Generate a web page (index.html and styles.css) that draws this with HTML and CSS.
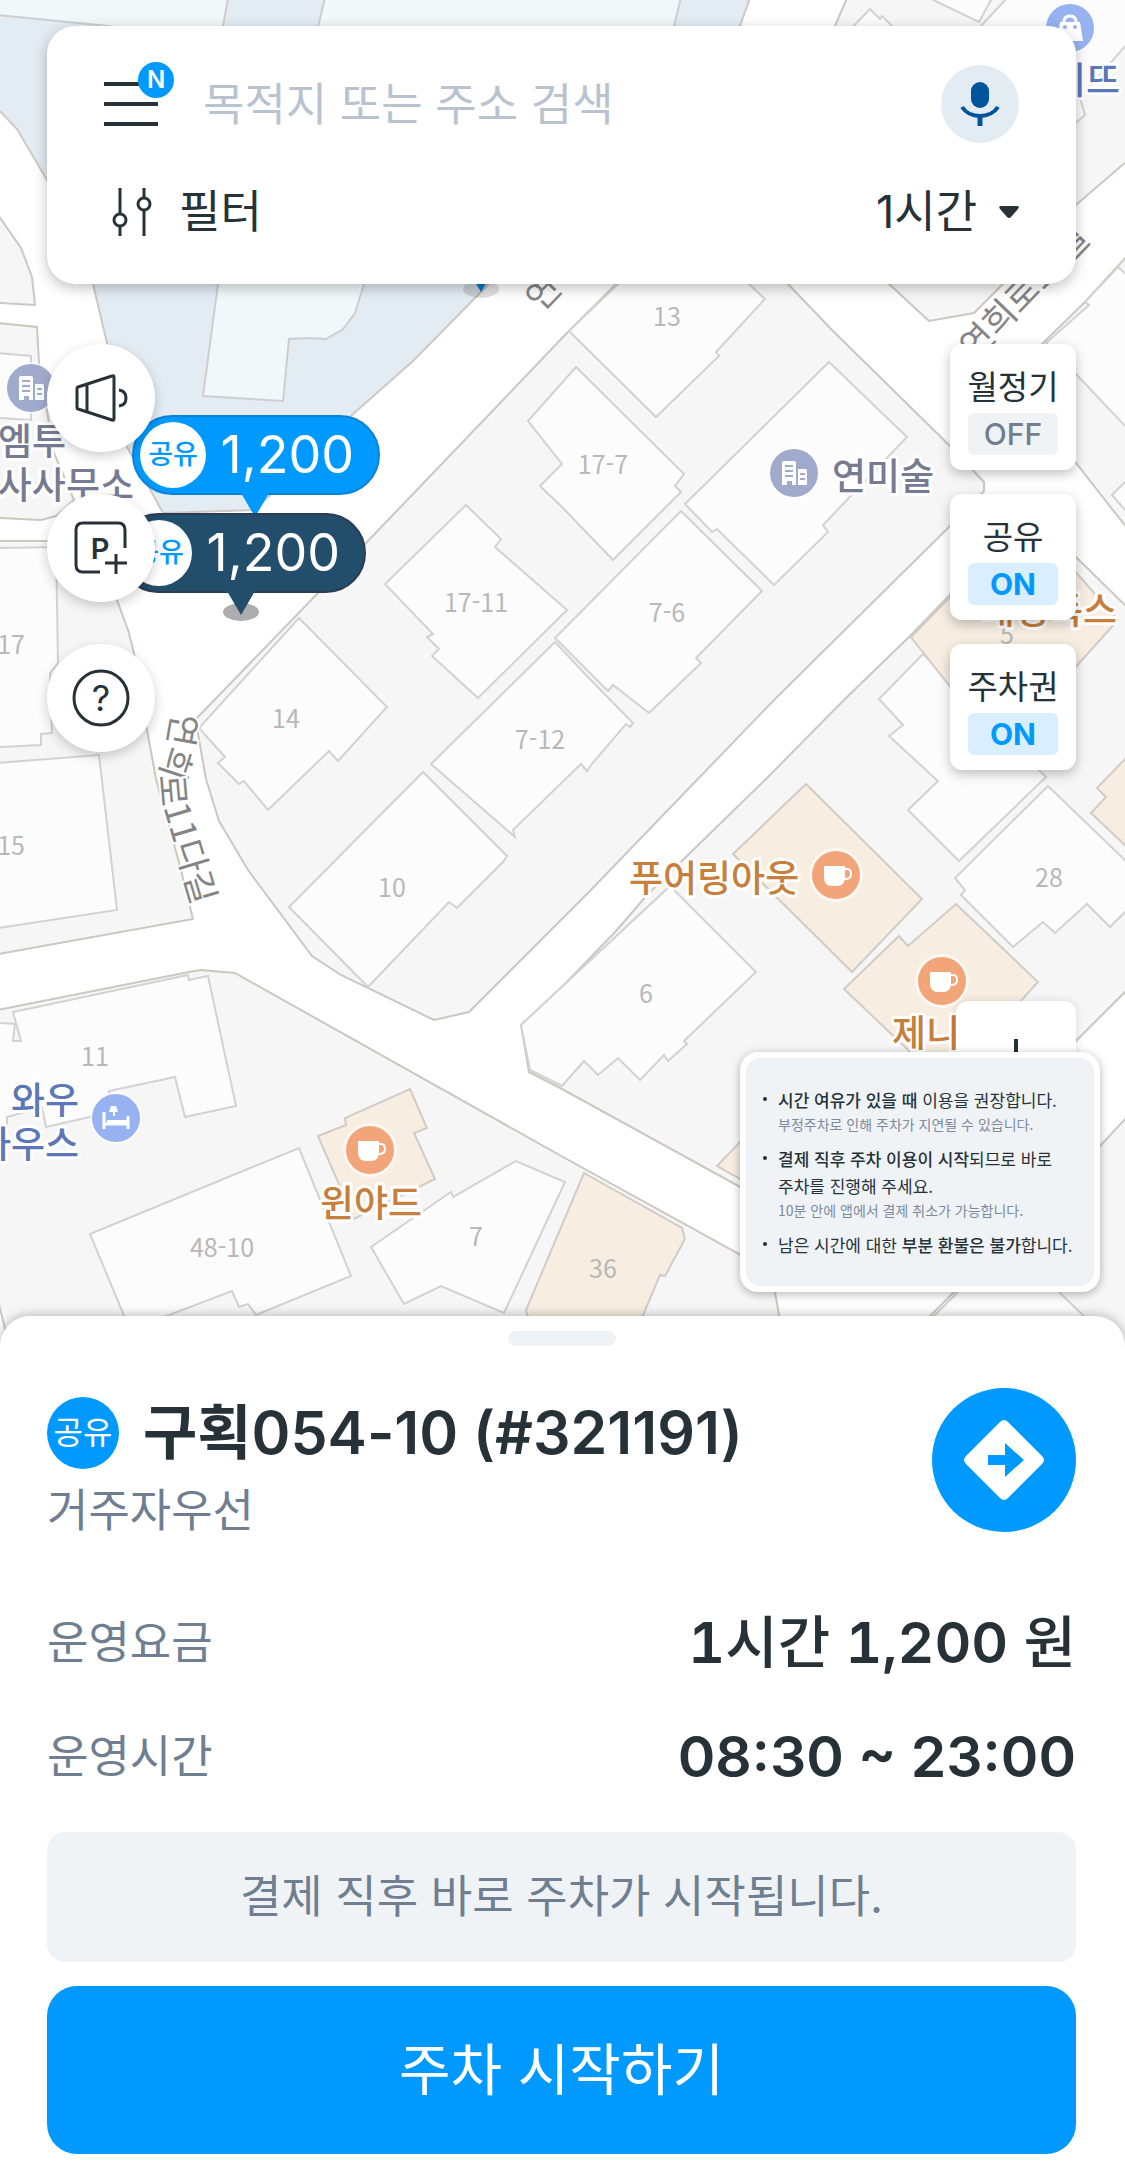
FILE: index.html
```html
<!DOCTYPE html>
<html lang="ko">
<head>
    <meta charset="UTF-8">
    <meta name="viewport" content="width=device-width, initial-scale=1.0">
    <title>주차 지도</title>
    <link rel="stylesheet" href="styles.css">
</head>
<body>

    <main class="map-view">
        <svg class="map" viewBox="0 0 1125 1346" preserveAspectRatio="xMidYMin slice" aria-label="지도">
            <defs>
                <g id="cafe">
                    <circle r="27" fill="#fff" opacity=".6"/>
                    <circle r="24" fill="#f1a578"/>
                    <path d="M-12 -9H9V2q0 9 -8 9H-4q-8 0 -8 -9z" fill="#fff"/>
                    <path d="M9 -6h2q4 0 4 5t-6 5" fill="none" stroke="#fff" stroke-width="2"/>
                </g>
                <g id="office">
                    <circle r="26" fill="#fff" opacity=".6"/>
                    <circle r="24" fill="#a0aacd"/>
                    <path d="M-12 12V-10q0 -2 2 -2H0q2 0 2 2V12H-2V8H-7v4zM4 -4h7q2 0 2 2V12H4z" fill="#fff"/>
                    <path d="M-9 -7H-1M-9 -2H-1M-9 3H-1M6 1h5M6 6h5" stroke="#a0aacd" stroke-width="2"/>
                </g>
                <g id="hotel">
                    <circle r="26" fill="#fff" opacity=".6"/>
                    <circle r="24" fill="#96b2f0"/>
                    <path d="M-12 -6V11M12 -2V11M-12 6H12" stroke="#fff" stroke-width="3"/>
                    <path d="M-9 2H11V7H-9zM-5 -12h5l2 6H-7zM-3 -6h2v4h-2z" fill="#fff"/>
                </g>
                <g id="bag">
                    <circle r="24" fill="#96b2f0"/>
                    <path d="M-10 -6H10L13 13H-13z" fill="#fff"/>
                    <path d="M-6 -6q0 -6 6 -6t6 6" fill="none" stroke="#fff" stroke-width="3"/>
                    <circle cx="-5" cy="-1" r="2" fill="#96b2f0"/>
                    <circle cx="5" cy="-1" r="2" fill="#96b2f0"/>
                </g>
                <path id="road-west" d="M173 712L165 757Q156 782 163 806L194 910"/>
            </defs>

            <rect width="1125" height="1346" fill="#fff"/>

            <!-- school block -->
            <path class="school" d="M-2 -2H750L740 26L640 125L481 292L413 361L352 415L255 510L163 513L127 447L107 343L93 284L47 180L17 129L-2 109z"/>
            <path class="school-building" d="M-2 -2H228L223 26L210 40L108 26L-2 15zM325 -2H681L674 26L660 60H310zM218 284L203 396L283 401L289 339L307 338L326 339L343 329L355 313L364 284L370 250H222z"/>

            <!-- land blocks between the roads -->
            <path class="land" d="M-2 215L21 248L32 277L35 305L-2 303z"/>
            <path class="land" d="M-2 323L37 327L39 363L54 453L74 500L56 516L41 520L-2 518z"/>
            <path class="land" d="M-2 541H47Q98 546 117 600L128 630L134 653L147 730L156 779L180 866L193 919L-2 954z"/>
            <path class="land" d="M-2 1010L189 972L201 970L235 973L563 1157L741 1255L765 1270L775 1292L785 1350H10L-2 1300z"/>
            <path class="land" d="M700 200L788 284L832 330L951 447L984 482V491L951 525L774 700L587 894L562 919L469 1012L434 1020L341 975L312 956L248 870L219 821L206 779L197 728V718L318 593L366 543L503 400L563 337L616 284z"/>
            <path class="land" d="M521 1025L562 987L616 931L648 894L765 780L844 700L911 635L1030 512L1077 558L1127 607V990L1077 1040L900 1230L742 1188L562 1089L529 1072z"/>
            <path class="land" d="M847 -2L835 26L770 165L889 284L929 321L974 313L1003 284L1077 204L1127 161V-2z"/>
            <path class="land" d="M1127 256L1085 302L1000 385L1076 463L1127 528z"/>
            <path class="land" d="M1127 1117L1101 1145L900 1346H1127z"/>

            <!-- buildings -->
            <path class="building" d="M-2 353L31 356V420L-2 418z"/>
            <path class="building" d="M-2 548L56 547L58 663L50 673L52 733L41 734V745L-2 747z"/>
            <path class="building" d="M-2 763L99 755L117 910L-2 928z"/>
            <path class="building" d="M-2 1023L15 1024L13 1041H21L13 1012L188 975L189 980L208 976L236 1106L185 1117L175 1077L109 1091L112 1112L46 1127L42 1107L7 1117V1127H-2z"/>
            <path class="building" d="M90 1234L299 1148L351 1276L256 1315L248 1304L239 1307L232 1291L169 1315L130 1330z"/>
            <path class="building" d="M371 1247L451 1192L453 1197L516 1161L565 1182L504 1313L441 1286L404 1304z"/>
            <path class="building" d="M569 331L618 284L690 230L749 284L765 299L716 352L719 356L656 417z"/>
            <path class="building" d="M576 367L684 474L675 486L681 492L613 560L562 507L540 486L562 464L528 421z"/>
            <path class="building" d="M829 362L907 437L823 525L828 532L774 585L717 529L712 532L685 504z"/>
            <path class="building" d="M466 505L501 539L495 547L567 610L478 698L432 656L439 649L427 637L433 634L385 584z"/>
            <path class="building" d="M681 511L762 591L696 658L701 663L649 713L613 685L608 691L555 638z"/>
            <path class="building" d="M555 642L584 673L633 723L630 727L626 724L591 765L587 771L581 764L513 830L515 837L431 764z"/>
            <path class="building" d="M299 618L387 707L338 761L329 751L268 810L244 781L239 784L218 763L225 757L199 728z"/>
            <path class="building" d="M423 772L507 856L503 862L457 908L449 902L368 987L289 907z"/>
            <path class="building" d="M670 886L756 972L684 1041L687 1044L668 1061L664 1055L640 1080L618 1058L598 1075L584 1061L562 1086L530 1070L521 1025z"/>
            <path class="building" d="M923 654L1046 777L959 861L908 810L938 781L889 736L903 725L879 699z"/>
            <path class="building" d="M1048 786L1127 862V910L1110 927L1087 904L1055 933L1043 922L1013 947L961 895L965 890L955 878z"/>
            <path class="building" d="M929 -2L979 22L992 -2zM840 40L870 9L880 19L882 16L906 40z"/>
            <path class="building" d="M1007 -2L981 26L1000 60L1077 122L1085 115L1080 98L1127 44V-2z"/>
            <path class="building" d="M1118 267L1127 275V428L1077 375L1046 343L1089 305L1085 302zM1127 480L1112 495L1127 512z"/>
            <path class="building" d="M910 1340L958 1292L1010 1245L1085 1317L1110 1346z"/>

            <!-- shops -->
            <path class="shop" d="M318 1136L346 1125L345 1118L410 1089L427 1128L414 1133L435 1179L354 1219z"/>
            <path class="shop" d="M584 1173L682 1228L685 1239L665 1276L660 1275L630 1346H535L526 1310z"/>
            <path class="shop" d="M806 784L922 899L852 972L733 854z"/>
            <path class="shop" d="M956 904L1038 982L945 1085L844 989L899 936L908 946z"/>
            <path class="shop" d="M911 637L1028 518L1118 620L1073 670L1000 750z"/>
            <path class="shop" d="M1127 757L1097 788L1106 797L1091 813L1127 847z"/>
            <path class="shop" d="M717 1166L742 1140L790 1190L742 1180z"/>

            <g class="lot">
                <text x="667" y="326">13</text>
                <text x="603" y="474">17-7</text>
                <text x="476" y="612">17-11</text>
                <text x="667" y="622">7-6</text>
                <text x="286" y="728">14</text>
                <text x="540" y="749">7-12</text>
                <text x="11" y="654">17</text>
                <text x="11" y="855">15</text>
                <text x="392" y="897">10</text>
                <text x="95" y="1066">11</text>
                <text x="222" y="1257">48-10</text>
                <text x="476" y="1246">7</text>
                <text x="603" y="1278">36</text>
                <text x="646" y="1003">6</text>
                <text x="1049" y="887">28</text>
                <text x="1007" y="644">5</text>
            </g>

            <g class="road-name">
                <text><textPath href="#road-west">연희로11다길</textPath></text>
                <text transform="translate(975 361) rotate(-46)">연희로11길</text>
                <text transform="translate(541 313) rotate(-46)">연</text>
            </g>

            <ellipse cx="481" cy="289" rx="18" ry="9" fill="#000" opacity=".12"/>
            <path d="M468 270H494L481 292z" fill="#0078c8"/>

            <use href="#office" x="794" y="473"/>
            <use href="#office" x="31" y="388"/>
            <use href="#hotel" x="116" y="1118"/>
            <use href="#cafe" x="836" y="875"/>
            <use href="#cafe" x="942" y="981"/>
            <use href="#cafe" x="370" y="1150"/>
            <use href="#bag" x="1070" y="28"/>

            <g class="poi">
                <text class="poi-office" x="832" y="490">연미술</text>
                <text class="poi-office poi-end" x="66" y="455">엠투</text>
                <text class="poi-office poi-end" x="134" y="499">사사무소</text>
                <text class="poi-blue poi-end" x="1120" y="94">이뜨</text>
                <text class="poi-blue poi-end" x="79" y="1114">와우</text>
                <text class="poi-blue poi-end" x="79" y="1158">하우스</text>
                <text class="poi-cafe" x="629" y="892">푸어링아웃</text>
                <text class="poi-cafe" x="892" y="1047">제니</text>
                <text class="poi-cafe" x="320" y="1217">윈야드</text>
                <text class="poi-cafe poi-end" x="1117" y="624">대성독스</text>
            </g>
        </svg>

        <button class="pin pin-blue" type="button">
            <span class="pin-tag">공유</span>
            <span class="pin-price">1,200</span>
        </button>
        <button class="pin pin-dark" type="button">
            <span class="pin-tag">공유</span>
            <span class="pin-price">1,200</span>
        </button>

        <div class="overlay">
            <form class="search-card">
                <div class="search-row">
                    <button class="menu-button" type="button" aria-label="메뉴">
                        <svg width="54" height="44" viewBox="0 0 54 44" stroke="#263238" stroke-width="4">
                            <path d="M0 2H54M0 22H54M0 42H54"/>
                        </svg>
                        <span class="new-badge">N</span>
                    </button>
                    <input class="search-input" type="text" aria-label="검색" placeholder="목적지 또는 주소 검색">
                    <button class="mic-button" type="button" aria-label="음성 검색">
                        <svg width="40" height="44" viewBox="0 0 40 44">
                            <rect x="11" y="0" width="18" height="26" rx="9" fill="#00549c"/>
                            <path d="M2 25Q8 34 20 34T38 25" fill="none" stroke="#00549c" stroke-width="4"/>
                            <path d="M20 34V44" stroke="#00549c" stroke-width="5"/>
                        </svg>
                    </button>
                </div>
                <div class="filter-row">
                    <button class="filter-button" type="button">
                        <svg width="40" height="48" viewBox="0 0 40 48" fill="none" stroke="#263238" stroke-width="3">
                            <path d="M8 0V25M8 38V48M32 0V10M32 23V48"/>
                            <circle cx="8" cy="32" r="6"/>
                            <circle cx="32" cy="16" r="6"/>
                        </svg>
                        필터
                    </button>
                    <label class="time-field">
                        <select class="time-select" aria-label="주차 시간">
                            <option>1시간</option>
                            <option>2시간</option>
                            <option>3시간</option>
                        </select>
                        <svg width="20" height="12" viewBox="0 0 20 12">
                            <path d="M2 0H18Q21 0 19 3L12 11Q10 13 8 11L1 3Q-1 0 2 0z" fill="#263238"/>
                        </svg>
                    </label>
                </div>
            </form>

            <div class="tools">
                <div class="round-tools">
                    <button class="round-button" type="button" aria-label="공지">
                        <svg width="56" height="56" viewBox="0 0 56 56" fill="none" stroke="#263238" stroke-width="3" stroke-linejoin="round">
                            <path d="M5 17L39 6Q41 5 41 7V49Q41 51 39 50L5 39Q4 39 4 37V19Q4 17 5 17zM14 14V42"/>
                            <path d="M46 20Q53 21 53 28T46 36"/>
                        </svg>
                    </button>
                    <button class="round-button" type="button" aria-label="주차장 추가">
                        <svg width="56" height="56" viewBox="0 0 56 56" fill="none" stroke="#263238" stroke-width="3">
                            <path d="M52 28V10Q52 3 45 3H10Q3 3 3 10V45Q3 52 10 52H27"/>
                            <text class="icon-text" x="27" y="39">P</text>
                            <path d="M43 34V54M32 43H54"/>
                        </svg>
                    </button>
                    <button class="round-button" type="button" aria-label="도움말">
                        <svg width="60" height="60" viewBox="0 0 60 60" fill="none" stroke="#263238" stroke-width="3">
                            <circle cx="30" cy="30" r="27"/>
                            <text class="icon-text icon-help" x="30" y="43">?</text>
                        </svg>
                    </button>
                </div>
                <div class="toggle-tools">
                    <button class="toggle" type="button" aria-pressed="false">월정기<span class="toggle-state">OFF</span></button>
                    <button class="toggle" type="button" aria-pressed="true">공유<span class="toggle-state on">ON</span></button>
                    <button class="toggle" type="button" aria-pressed="true">주차권<span class="toggle-state on">ON</span></button>
                </div>
            </div>
        </div>

        <button class="zoom-button" type="button" aria-label="확대">
            <svg width="44" height="44" viewBox="0 0 44 44" stroke="#263238" stroke-width="4">
                <path d="M22 0V44M0 22H44"/>
            </svg>
        </button>

        <aside class="notice">
            <ul class="notice-list">
                <li><b>시간 여유가 있을 때</b> 이용을 권장합니다.<small>부정주차로 인해 주차가 지연될 수 있습니다.</small></li>
                <li><b>결제 직후 주차 이용이 시작</b>되므로 바로<br>주차를 진행해 주세요.<small>10분 안에 앱에서 결제 취소가 가능합니다.</small></li>
                <li>남은 시간에 대한 <b>부분 환불은 불가</b>합니다.</li>
            </ul>
        </aside>
    </main>

    <section class="sheet">
        <div class="handle"></div>
        <header class="place">
            <div class="place-info">
                <div class="place-title">
                    <span class="share-badge">공유</span>
                    <h1>구획054-10 (#321191)</h1>
                </div>
                <p class="place-type">거주자우선</p>
            </div>
            <button class="route-button" type="button" aria-label="길찾기">
                <svg width="80" height="80" viewBox="0 0 80 80">
                    <path d="M36 2Q40 -2 44 2L78 36Q82 40 78 44L44 78Q40 82 36 78L2 44Q-2 40 2 36z" fill="#fff"/>
                    <path d="M24 35H41V23L60 40L41 57V45H24z" fill="#0099ff"/>
                </svg>
            </button>
        </header>
        <dl class="details">
            <div class="detail">
                <dt>운영요금</dt>
                <dd class="price">1<span class="unit">시간</span> 1,200 <span class="unit">원</span></dd>
            </div>
            <div class="detail">
                <dt>운영시간</dt>
                <dd>08:30 ~ 23:00</dd>
            </div>
        </dl>
        <p class="hint">결제 직후 바로 주차가 시작됩니다.</p>
        <button class="start-button" type="button">주차 시작하기</button>
    </section>

</body>
</html>
```

FILE: styles.css
```css
* {
    box-sizing: border-box;
}

body {
    margin: 0;
    min-height: 100vh;
    display: flex;
    flex-direction: column;
    font-family: Inter, "Noto Sans CJK KR", sans-serif;
    font-size: 45px;
    color: #263238;
    background-color: #fff;
}

button,
input,
select {
    margin: 0;
    padding: 0;
    border: none;
    background: none;
    font: inherit;
    color: inherit;
}

button {
    display: flex;
    justify-content: center;
    align-items: center;
    cursor: pointer;
}

/* Map area, fills what the sheet leaves free */
.map-view {
    position: relative;
    flex: 1;
    min-height: 1300px;
    overflow: hidden;
}

.map {
    position: absolute;
    inset: 0;
    width: 100%;
    height: 100%;
}

.school {
    fill: #e3ebf3;
    stroke: #cdc9c3;
    stroke-width: 2;
}

.school-building {
    fill: #f2f7fa;
    stroke: #cccfd2;
    stroke-width: 2;
}

.land {
    fill: #f6f6f6;
    stroke: #ccc7bf;
    stroke-width: 2;
}

.building {
    fill: #fcfcfc;
    stroke: #d2d2d2;
    stroke-width: 2;
}

.shop {
    fill: #f7ede1;
    stroke: #d2ccc6;
    stroke-width: 2;
}

.lot {
    font-family: "Noto Sans CJK KR", sans-serif;
    font-size: 25px;
    fill: #b8b8b8;
    text-anchor: middle;
}

.road-name {
    font-family: "Noto Sans CJK KR", sans-serif;
    font-size: 35px;
    fill: #858585;
    stroke: #fff;
    stroke-width: 4;
    paint-order: stroke;
}

.poi {
    font-family: "Noto Sans CJK KR", sans-serif;
    font-size: 37px;
    font-weight: 500;
    stroke: #fff;
    stroke-width: 6;
    stroke-linejoin: round;
    paint-order: stroke;
}

.poi-end {
    text-anchor: end;
}

.poi-office {
    fill: #767b92;
}

.poi-blue {
    fill: #5b77b8;
}

.poi-cafe {
    fill: #c67f3c;
}

/* Price pins */
.pin {
    position: absolute;
    width: 248px;
    height: 80px;
    padding: 0 24px 0 6px;
    justify-content: space-between;
    border-radius: 40px;
    color: #fff;
}

.pin::after {
    content: "";
    position: absolute;
    top: 76px;
    left: 107px;
    border: 14px solid transparent;
    border-top: 24px solid;
    border-bottom: 0;
}

.pin-blue {
    left: 132px;
    top: 415px;
    border: 2px solid #0b82d4;
    background-color: #0099ff;
}

.pin-blue::after {
    border-top-color: #0099ff;
}

.pin-dark {
    left: 118px;
    top: 513px;
    border: 2px solid #2b3c55;
    background-color: #224d6b;
}

.pin-dark::before {
    content: "";
    position: absolute;
    top: 88px;
    left: 103px;
    width: 36px;
    height: 18px;
    border-radius: 50%;
    background-color: #adadad;
}

.pin-dark::after {
    border-top-color: #224d6b;
}

.pin-tag {
    width: 66px;
    height: 66px;
    border-radius: 50%;
    background-color: #fff;
    color: #0099ff;
    font-size: 27px;
    font-weight: 500;
    line-height: 66px;
}

.pin-price {
    font-size: 52px;
    line-height: 76px;
}

/* Search card and map tools */
.overlay {
    padding: 26px 49px 26px 47px;
}

.search-card {
    position: relative;
    display: flex;
    flex-direction: column;
    gap: 42px;
    padding: 39px 57px 45px;
    border-radius: 28px;
    background-color: #fff;
    box-shadow: 0 4px 14px rgba(0, 0, 0, 0.25);
}

.search-row,
.filter-row {
    display: flex;
    align-items: center;
}

.filter-row {
    justify-content: space-between;
    padding-left: 8px;
}

.menu-button {
    position: relative;
}

.new-badge {
    position: absolute;
    top: -20px;
    left: 34px;
    width: 36px;
    height: 36px;
    border-radius: 50%;
    background-color: #0099ff;
    color: #fff;
    font-size: 24px;
    font-weight: 600;
    line-height: 36px;
}

.search-input {
    flex: 1;
    min-width: 0;
    margin: 0 45px;
    outline: none;
}

.search-input::placeholder {
    color: #b9c3d0;
    opacity: 1;
}

.mic-button {
    width: 78px;
    height: 78px;
    border-radius: 50%;
    background-color: #e3ebf3;
}

.filter-button {
    gap: 27px;
    line-height: 54px;
}

.time-field {
    display: flex;
    align-items: center;
    gap: 12px;
}

.time-select {
    appearance: none;
    line-height: 54px;
}

.tools {
    display: flex;
    justify-content: space-between;
    align-items: flex-start;
    margin-top: 60px;
}

.round-tools {
    position: relative;
    display: flex;
    flex-direction: column;
    gap: 42px;
}

.round-button {
    width: 108px;
    height: 108px;
    border-radius: 50%;
    background-color: #fff;
    box-shadow: 0 4px 12px rgba(0, 0, 0, 0.2);
}

.icon-text {
    fill: #263238;
    stroke: none;
    font-size: 29px;
    font-weight: 600;
    text-anchor: middle;
}

.icon-help {
    font-size: 36px;
    font-weight: 400;
}

.toggle-tools {
    position: relative;
    display: flex;
    flex-direction: column;
    gap: 24px;
}

.toggle {
    width: 126px;
    height: 126px;
    padding-top: 2px;
    flex-direction: column;
    border-radius: 12px;
    background-color: #fff;
    box-shadow: 0 4px 12px rgba(0, 0, 0, 0.25);
    font-size: 33px;
    line-height: 52px;
}

.toggle-state {
    width: 90px;
    border-radius: 6px;
    background-color: #eff3f6;
    color: #6f7f91;
    font-size: 30px;
    font-weight: 500;
    line-height: 42px;
}

.toggle-state.on {
    background-color: #d9eefe;
    color: #0099ff;
    font-weight: 700;
}

.zoom-button {
    position: absolute;
    right: 49px;
    bottom: 225px;
    width: 120px;
    height: 120px;
    border-radius: 12px;
    background-color: #fff;
    box-shadow: 0 0 10px rgba(0, 0, 0, 0.12);
}

/* Notice over the map */
.notice {
    position: absolute;
    right: 25px;
    bottom: 54px;
    padding: 6px;
    border-radius: 18px;
    background-color: #fff;
    box-shadow: 0 2px 10px rgba(0, 0, 0, 0.3);
}

.notice-list {
    display: flex;
    flex-direction: column;
    gap: 9px;
    width: 348px;
    margin: 0;
    padding: 28px 0 28px 32px;
    border-radius: 14px;
    background-color: #eff3f6;
    font-family: "Noto Sans CJK KR", sans-serif;
    font-size: 17px;
    line-height: 27px;
    white-space: nowrap;
    list-style: none;
}

.notice-list li {
    position: relative;
}

.notice-list li::before {
    content: "";
    position: absolute;
    top: 11px;
    left: -15px;
    width: 4px;
    height: 4px;
    border-radius: 50%;
    background-color: #263238;
}

.notice-list b {
    font-weight: 500;
}

.notice-list small {
    display: block;
    color: #7d8a9b;
    font-size: 14px;
    line-height: 23px;
}

/* Bottom sheet */
.sheet {
    position: relative;
    margin-top: -30px;
    padding: 15px 49px 8px 47px;
    border-radius: 30px 30px 0 0;
    background-color: #fff;
    box-shadow: 0 0 12px rgba(0, 0, 0, 0.3);
}

.handle {
    width: 108px;
    height: 15px;
    margin: 0 auto 42px;
    border-radius: 8px;
    background-color: #eff3f6;
}

.place {
    display: flex;
    justify-content: space-between;
    align-items: flex-start;
}

.place-info {
    padding-top: 9px;
}

.place-title {
    display: flex;
    align-items: center;
    gap: 24px;
}

.place-title h1 {
    margin: 0;
    font-size: 59px;
    font-weight: 600;
    line-height: 72px;
}

.share-badge {
    width: 72px;
    height: 72px;
    border-radius: 50%;
    background-color: #0099ff;
    color: #fff;
    font-size: 32px;
    line-height: 72px;
    text-align: center;
}

.place-type {
    margin: 15px 0 0;
    color: #6f7f91;
    line-height: 54px;
}

.route-button {
    width: 144px;
    height: 144px;
    border-radius: 50%;
    background-color: #0099ff;
}

.details {
    display: flex;
    flex-direction: column;
    gap: 42px;
    margin: 69px 0 39px;
}

.detail {
    display: flex;
    justify-content: space-between;
    line-height: 72px;
}

.detail dt {
    color: #6f7f91;
}

.detail dd {
    margin: 0;
    font-size: 57px;
    font-weight: 600;
}

.price {
    font-variant-numeric: tabular-nums;
}

.unit {
    font-weight: 500;
}

.hint {
    margin: 0 0 24px;
    border-radius: 18px;
    background-color: #eff3f6;
    color: #6f7f91;
    line-height: 130px;
    text-align: center;
}

.start-button {
    width: 100%;
    height: 168px;
    padding-bottom: 10px;
    border-radius: 30px;
    background-color: #0099ff;
    color: #fff;
    font-size: 56px;
}
```
